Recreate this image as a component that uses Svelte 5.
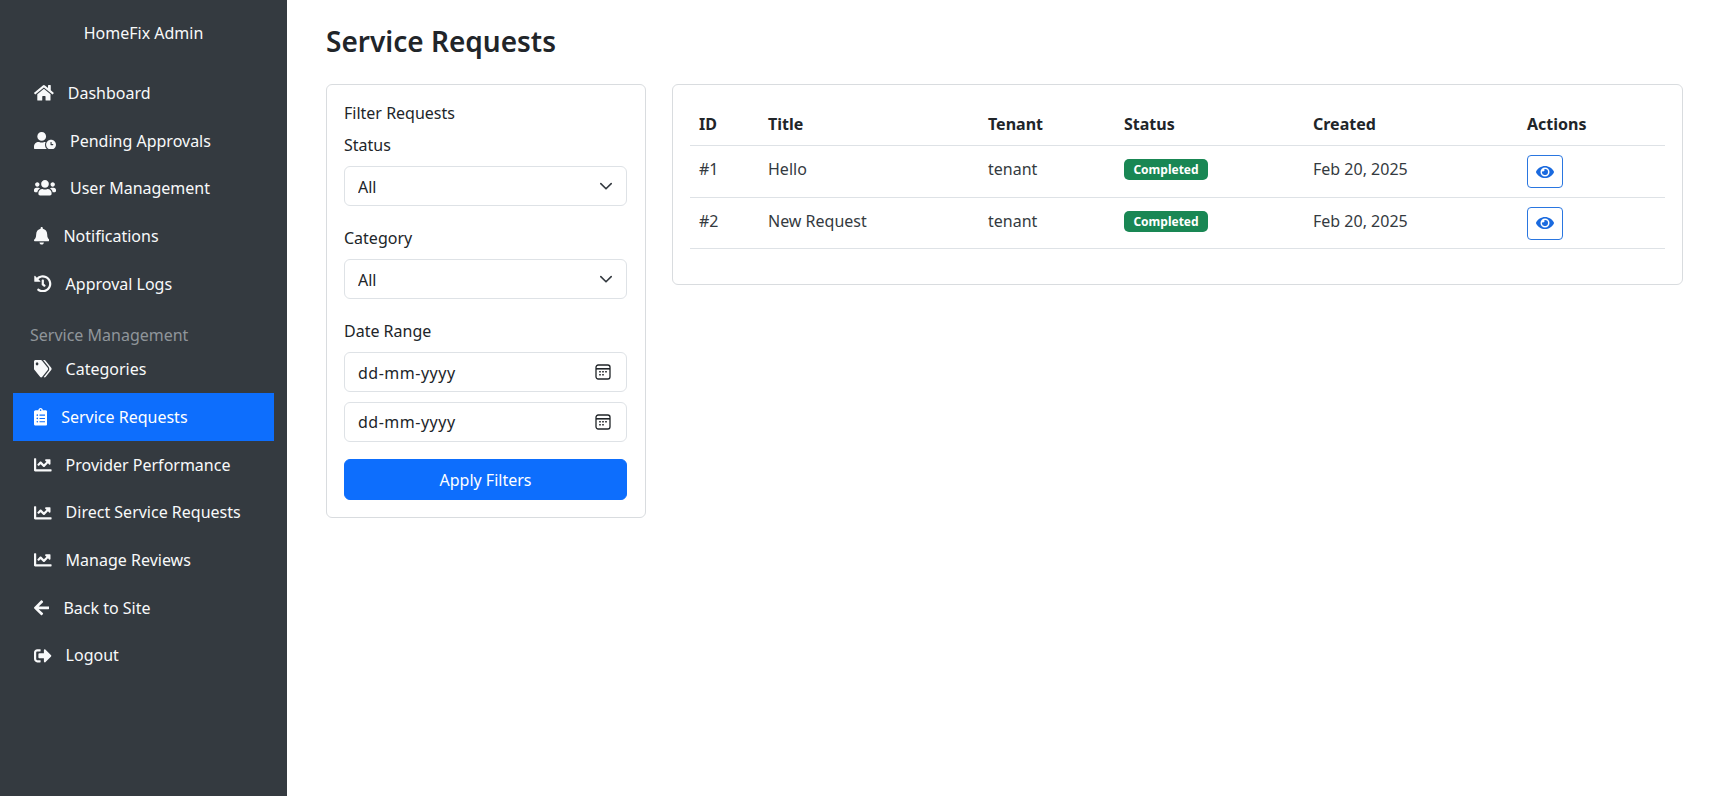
<script lang="ts">
	// Sidebar entries, icons are font-awesome shapes
	const icons: Record<string, { w: number; box: string; d: string }> = {
		home: { w: 19.8, box: '0 0 576 512', d: 'M280.37 148.26L96 300.11V464a16 16 0 0 0 16 16l112.06-.29a16 16 0 0 0 15.92-16V368a16 16 0 0 1 16-16h64a16 16 0 0 1 16 16v95.64a16 16 0 0 0 16 16.05L464 480a16 16 0 0 0 16-16V300L295.67 148.26a12.19 12.19 0 0 0-15.3 0zM571.6 251.47L488 182.56V44.05a12 12 0 0 0-12-12h-56a12 12 0 0 0-12 12v72.61L318.47 43a48 48 0 0 0-61 0L4.34 251.47a12 12 0 0 0-1.6 16.9l25.5 31A12 12 0 0 0 45.15 301l235.22-193.74a12.19 12.19 0 0 1 15.3 0L530.9 301a12 12 0 0 0 16.9-1.6l25.5-31a12 12 0 0 0-1.7-16.93z' },
		userClock: { w: 22, box: '0 0 640 512', d: 'M496 224c-79.6 0-144 64.4-144 144s64.4 144 144 144 144-64.4 144-144-64.4-144-144-144zm64 150.3c0 5.3-4.4 9.7-9.7 9.7h-60.6c-5.3 0-9.7-4.4-9.7-9.7v-76.6c0-5.3 4.4-9.7 9.7-9.7h12.6c5.3 0 9.7 4.4 9.7 9.7V352h38.3c5.3 0 9.7 4.4 9.7 9.7v12.6zM320 368c0-27.8 6.7-54.1 18.2-77.5-8-1.5-16.2-2.5-24.6-2.5h-16.7c-22.2 10.2-46.9 16-72.9 16s-50.6-5.8-72.9-16h-16.7C60.2 288 0 348.2 0 422.4V464c0 26.5 21.5 48 48 48h347.1c-45.3-31.9-75.1-84.5-75.1-144zm-96-112c70.7 0 128-57.3 128-128S294.7 0 224 0 96 57.3 96 128s57.3 128 128 128z' },
		users: { w: 22, box: '0 0 640 512', d: 'M96 224c35.3 0 64-28.7 64-64s-28.7-64-64-64-64 28.7-64 64 28.7 64 64 64zm448 0c35.3 0 64-28.7 64-64s-28.7-64-64-64-64 28.7-64 64 28.7 64 64 64zm32 32h-64c-17.6 0-33.5 7.1-45.1 18.6 40.3 22.1 68.9 62 75.1 109.4h66c17.7 0 32-14.3 32-32v-32c0-35.3-28.7-64-64-64zm-256 0c61.9 0 112-50.1 112-112S381.9 32 320 32 208 82.1 208 144s50.1 112 112 112zm76.8 32h-8.3c-20.8 10-43.9 16-68.5 16s-47.6-6-68.5-16h-8.3C179.6 288 128 339.6 128 403.2V432c0 26.5 21.5 48 48 48h288c26.5 0 48-21.5 48-48v-28.8c0-63.6-51.6-115.2-115.2-115.2zm-223.7-13.4C161.5 263.1 145.6 256 128 256H64c-35.3 0-64 28.7-64 64v32c0 17.7 14.3 32 32 32h65.9c6.3-47.4 34.9-87.3 75.2-109.4z' },
		bell: { w: 15.4, box: '0 0 448 512', d: 'M224 512c35.32 0 63.97-28.65 63.97-64H160.03c0 35.35 28.65 64 63.97 64zm215.39-149.71c-19.32-20.76-55.47-51.99-55.47-154.29 0-77.7-54.48-139.9-127.94-155.16V32c0-17.67-14.32-32-31.98-32s-31.98 14.33-31.98 32v20.84C118.56 68.1 64.08 130.3 64.08 208c0 102.3-36.15 133.53-55.47 154.29-6 6.45-8.66 14.16-8.61 21.71.11 16.4 12.98 32 32.1 32h383.8c19.12 0 32-15.6 32.1-32 .05-7.55-2.61-15.27-8.61-21.71z' },
		history: { w: 17.6, box: '0 0 512 512', d: 'M504 255.531c.253 136.64-111.18 248.372-247.82 248.468-59.015.042-113.223-20.53-155.822-54.911-11.077-8.94-11.905-25.541-1.839-35.607l11.267-11.267c8.609-8.609 22.353-9.551 31.891-1.984C173.062 425.135 212.781 440 256 440c101.705 0 184-82.311 184-184 0-101.705-82.311-184-184-184-48.814 0-93.149 18.969-126.068 49.932l50.754 50.754c10.08 10.08 2.941 27.314-11.313 27.314H24c-8.837 0-16-7.163-16-16V38.627c0-14.254 17.234-21.393 27.314-11.314l49.372 49.372C129.209 34.136 189.552 8 256 8c136.81 0 247.747 110.78 248 247.531zm-180.912 78.784l9.823-12.63c8.138-10.463 6.253-25.542-4.21-33.679L288 256.349V152c0-13.255-10.745-24-24-24h-16c-13.255 0-24 10.745-24 24v135.651l65.409 50.874c10.463 8.137 25.541 6.253 33.679-4.21z' },
		tags: { w: 17.6, box: '0 0 640 512', d: 'M497.941 225.941L286.059 14.059A48 48 0 0 0 252.118 0H48C21.49 0 0 21.49 0 48v204.118a48 48 0 0 0 14.059 33.941l211.882 211.882c18.744 18.745 49.136 18.746 67.882 0l204.118-204.118c18.745-18.745 18.745-49.137 0-67.882zM112 160c-26.51 0-48-21.49-48-48s21.49-48 48-48 48 21.49 48 48-21.49 48-48 48zm513.941 133.823L421.823 497.941c-18.745 18.745-49.137 18.745-67.882 0l-.36-.36L527.64 323.522c16.999-16.999 26.36-39.6 26.36-63.64s-9.362-46.641-26.36-63.64L331.397 0h48.721a48 48 0 0 1 33.941 14.059l211.882 211.882c18.745 18.745 18.745 49.137 0 67.882z' },
		clipboard: { w: 13.2, box: '0 0 384 512', d: 'M336 64h-80c0-35.3-28.7-64-64-64s-64 28.7-64 64H48C21.5 64 0 85.5 0 112v352c0 26.5 21.5 48 48 48h288c26.5 0 48-21.5 48-48V112c0-26.5-21.5-48-48-48zM96 424c-13.3 0-24-10.7-24-24s10.7-24 24-24 24 10.7 24 24-10.7 24-24 24zm0-96c-13.3 0-24-10.7-24-24s10.7-24 24-24 24 10.7 24 24-10.7 24-24 24zm0-96c-13.3 0-24-10.7-24-24s10.7-24 24-24 24 10.7 24 24-10.7 24-24 24zm96-192c13.3 0 24 10.7 24 24s-10.7 24-24 24-24-10.7-24-24 10.7-24 24-24zm128 368c0 4.4-3.6 8-8 8H168c-4.4 0-8-3.6-8-8v-16c0-4.4 3.6-8 8-8h144c4.4 0 8 3.6 8 8v16zm0-96c0 4.4-3.6 8-8 8H168c-4.4 0-8-3.6-8-8v-16c0-4.4 3.6-8 8-8h144c4.4 0 8 3.6 8 8v16zm0-96c0 4.4-3.6 8-8 8H168c-4.4 0-8-3.6-8-8v-16c0-4.4 3.6-8 8-8h144c4.4 0 8 3.6 8 8v16z' },
		chart: { w: 17.6, box: '0 0 512 512', d: 'M496 384H64V80c0-8.84-7.16-16-16-16H16C7.16 64 0 71.16 0 80v336c0 17.67 14.33 32 32 32h464c8.84 0 16-7.16 16-16v-32c0-8.84-7.16-16-16-16zM464 96H345.94c-21.38 0-32.09 25.85-16.97 40.97l32.4 32.4L288 242.75l-73.37-73.37c-12.5-12.5-32.76-12.5-45.25 0l-68.69 68.69c-6.25 6.25-6.25 16.38 0 22.63l22.62 22.62c6.25 6.25 16.38 6.25 22.63 0L192 237.25l73.37 73.37c12.5 12.5 32.76 12.5 45.25 0l96-96 32.4 32.4c15.12 15.12 40.97 4.41 40.97-16.97V112c.01-8.84-7.15-16-15.99-16z' },
		back: { w: 15.4, box: '0 0 448 512', d: 'M257.5 445.1l-22.2 22.2c-9.4 9.4-24.6 9.4-33.9 0L7 273c-9.4-9.4-9.4-24.6 0-33.9L201.4 44.7c9.4-9.4 24.6-9.4 33.9 0l22.2 22.2c9.5 9.5 9.3 25-.4 34.3L136.6 216H424c13.3 0 24 10.7 24 24v32c0 13.3-10.7 24-24 24H136.6l120.5 114.8c9.8 9.3 10 24.8.4 34.3z' },
		logout: { w: 17.6, box: '0 0 512 512', d: 'M497 273L329 441c-15 15-41 4.5-41-17v-96H152c-13.3 0-24-10.7-24-24v-96c0-13.3 10.7-24 24-24h136V88c0-21.4 25.9-32 41-17l168 168c9.3 9.4 9.3 24.6 0 34zM192 436v-40c0-6.6-5.4-12-12-12H96c-17.7 0-32-14.3-32-32V160c0-17.7 14.3-32 32-32h84c6.6 0 12-5.4 12-12V76c0-6.6-5.4-12-12-12H96c-53 0-96 43-96 96v192c0 53 43 96 96 96h84c6.6 0 12-5.4 12-12z' }
	};

	const mainNav = [
		{ label: 'Dashboard', icon: 'home' },
		{ label: 'Pending Approvals', icon: 'userClock' },
		{ label: 'User Management', icon: 'users' },
		{ label: 'Notifications', icon: 'bell' },
		{ label: 'Approval Logs', icon: 'history' }
	];

	const serviceNav = [
		{ label: 'Categories', icon: 'tags' },
		{ label: 'Service Requests', icon: 'clipboard', active: true },
		{ label: 'Provider Performance', icon: 'chart' },
		{ label: 'Direct Service Requests', icon: 'chart' },
		{ label: 'Manage Reviews', icon: 'chart' },
		{ label: 'Back to Site', icon: 'back' },
		{ label: 'Logout', icon: 'logout' }
	];

	const requests = [
		{ id: '#1', title: 'Hello', tenant: 'tenant', status: 'Completed', created: 'Feb 20, 2025' },
		{ id: '#2', title: 'New Request', tenant: 'tenant', status: 'Completed', created: 'Feb 20, 2025' }
	];
</script>

{#snippet navItem(item)}
	<li>
		<a href="#top" class="nav-link" class:active={item.active}>
			<svg width={icons[item.icon].w} height="17.6" viewBox={icons[item.icon].box} preserveAspectRatio="none" fill="currentColor">
				<path d={icons[item.icon].d} />
			</svg>
			<span>{item.label}</span>
		</a>
	</li>
{/snippet}

{#snippet calendar()}
	<svg class="field-icon calendar" width="16" height="16" viewBox="0 0 16 16" fill="none">
		<rect x="1" y="1" width="14" height="14" rx="2.2" stroke="#212529" stroke-width="1.3" />
		<path d="M1 4.8h14" stroke="#212529" stroke-width="1.6" />
		<path d="M4.2 7.8h1.6M7.2 7.8h1.6M10.2 7.8h1.6M4.2 10.8h1.6M7.2 10.8h1.6" stroke="#212529" stroke-width="1.5" />
	</svg>
{/snippet}

{#snippet chevron()}
	<svg class="field-icon" width="16" height="16" viewBox="0 0 16 16" fill="none">
		<path d="M2.8 5.6L8 10.8l5.2-5.2" stroke="#343a40" stroke-width="1.6" stroke-linecap="round" stroke-linejoin="round" />
	</svg>
{/snippet}

<div class="layout">
	<aside class="sidebar">
		<div class="brand">HomeFix Admin</div>
		<ul class="nav">
			{#each mainNav as item}
				{@render navItem(item)}
			{/each}
		</ul>
		<div class="nav-heading">Service Management</div>
		<ul class="nav">
			{#each serviceNav as item}
				{@render navItem(item)}
			{/each}
		</ul>
	</aside>

	<main class="content">
		<h1>Service Requests</h1>
		<div class="columns">
			<section class="card filters">
				<div class="filter-title">Filter Requests</div>

				<label for="status">Status</label>
				<div class="field">
					<select id="status"><option>All</option></select>
					{@render chevron()}
				</div>

				<label for="category">Category</label>
				<div class="field">
					<select id="category"><option>All</option></select>
					{@render chevron()}
				</div>

				<label for="from">Date Range</label>
				<div class="field tight">
					<input id="from" type="text" placeholder="dd-mm-yyyy" />
					{@render calendar()}
				</div>
				<div class="field last">
					<input type="text" placeholder="dd-mm-yyyy" />
					{@render calendar()}
				</div>

				<button class="apply">Apply Filters</button>
			</section>

			<section class="card results">
				<table>
					<colgroup>
						<col style="width: 69px" />
						<col style="width: 220px" />
						<col style="width: 136px" />
						<col style="width: 189px" />
						<col style="width: 214px" />
						<col />
					</colgroup>
					<thead>
						<tr>
							<th>ID</th>
							<th>Title</th>
							<th>Tenant</th>
							<th>Status</th>
							<th>Created</th>
							<th>Actions</th>
						</tr>
					</thead>
					<tbody>
						{#each requests as req}
							<tr>
								<td>{req.id}</td>
								<td>{req.title}</td>
								<td>{req.tenant}</td>
								<td class="status-cell"><span class="badge">{req.status}</span></td>
								<td>{req.created}</td>
								<td class="action-cell">
									<button class="view" aria-label="View">
										<svg width="18" height="16" viewBox="0 0 576 512" fill="currentColor">
											<path d="M572.52 241.4C518.29 135.59 410.93 64 288 64S57.68 135.64 3.48 241.41a32.35 32.35 0 0 0 0 29.19C57.71 376.41 165.07 448 288 448s230.32-71.64 284.52-177.41a32.35 32.35 0 0 0 0-29.19zM288 400a144 144 0 1 1 144-144 143.93 143.93 0 0 1-144 144zm0-240a95.31 95.31 0 0 0-25.31 3.79 47.85 47.85 0 0 1-66.9 66.9A95.78 95.78 0 1 0 288 160z" />
										</svg>
									</button>
								</td>
							</tr>
						{/each}
					</tbody>
				</table>
			</section>
		</div>
	</main>
</div>

<style>
	:global(body) {
		margin: 0;
		background: #fff;
		color: #212529;
		font-family: 'Noto Sans', 'Open Sans', sans-serif;
		font-size: 16px;
	}

	.layout {
		display: flex;
		min-height: 796px;
	}

	/* Sidebar */
	.sidebar {
		flex: 0 0 287px;
		box-sizing: border-box;
		padding: 21px 13px 0;
		background: #343a40;
		color: #f8f9fa;
	}

	.brand {
		height: 24px;
		line-height: 24px;
		margin-bottom: 24px;
		text-align: center;
	}

	.nav {
		list-style: none;
		margin: 0;
		padding: 0;
	}

	.nav-link {
		display: flex;
		align-items: center;
		gap: 14px;
		height: 47.7px;
		padding-left: 21px;
		color: #f8f9fa;
		text-decoration: none;
	}

	.nav-link.active {
		background: #0d6efd;
		color: #fff;
	}

	.nav-heading {
		height: 21px;
		line-height: 22px;
		margin: 17px 0 0 17px;
		color: #8f959a;
	}

	/* Main area */
	.content {
		flex: 1;
		min-width: 0;
		padding: 21px 39px 0;
	}

	h1 {
		margin: 0 0 23px;
		font-size: 28px;
		line-height: 40px;
		font-weight: 600;
	}

	.columns {
		display: flex;
		align-items: flex-start;
		gap: 26px;
	}

	.card {
		box-sizing: border-box;
		border: 1px solid #d9dcdf;
		border-radius: 6px;
		background: #fff;
	}

	.filters {
		flex: 0 0 320px;
		padding: 16px 18px 17px 17px;
	}

	.filter-title {
		height: 24px;
		line-height: 24px;
		margin-bottom: 8px;
	}

	label {
		display: block;
		height: 24px;
		line-height: 24px;
		margin-bottom: 9px;
	}

	.field {
		position: relative;
		margin-bottom: 20px;
	}

	.field.tight {
		margin-bottom: 9.5px;
	}

	.field.last {
		margin-bottom: 17.5px;
	}

	.field-icon {
		position: absolute;
		top: 12px;
		right: 13px;
		pointer-events: none;
	}

	.field-icon.calendar {
		right: 16px;
	}

	select,
	input {
		display: block;
		box-sizing: border-box;
		width: 100%;
		height: 40px;
		padding: 1px 13px 0;
		border: 1px solid #dee2e6;
		border-radius: 6px;
		background: #fff;
		color: #212529;
		font: inherit;
		appearance: none;
	}

	input::placeholder {
		color: #212529;
		opacity: 1;
		letter-spacing: 0.5px;
	}

	.apply {
		display: block;
		width: 100%;
		height: 41px;
		border: 1px solid #0d6efd;
		border-radius: 6px;
		background: #0d6efd;
		color: #fff;
		font: inherit;
	}

	.results {
		flex: 1;
		min-width: 0;
		padding: 18px 17px 35px 17px;
	}

	table {
		width: 100%;
		border-collapse: collapse;
		table-layout: fixed;
	}

	th {
		height: 42px;
		padding: 0 9px;
		border-bottom: 1px solid #dee2e6;
		text-align: left;
		font-weight: 700;
	}

	td {
		box-sizing: border-box;
		height: 51.5px;
		padding: 11px 9px 0;
		border-bottom: 1px solid #dee2e6;
		color: #343a40;
		line-height: 24px;
		vertical-align: top;
	}

	td.status-cell {
		padding-top: 13px;
	}

	td.action-cell {
		padding-top: 9px;
	}

	.badge {
		display: block;
		box-sizing: border-box;
		width: 84px;
		height: 21px;
		line-height: 21px;
		border-radius: 5px;
		background: #198754;
		color: #fff;
		text-align: center;
		font-size: 12px;
		font-weight: 700;
	}

	.view {
		display: flex;
		align-items: center;
		justify-content: center;
		box-sizing: border-box;
		width: 36px;
		height: 33px;
		padding: 0;
		border: 1px solid #2a76e0;
		border-radius: 4px;
		background: #fff;
		color: #1a6adf;
	}
</style>
